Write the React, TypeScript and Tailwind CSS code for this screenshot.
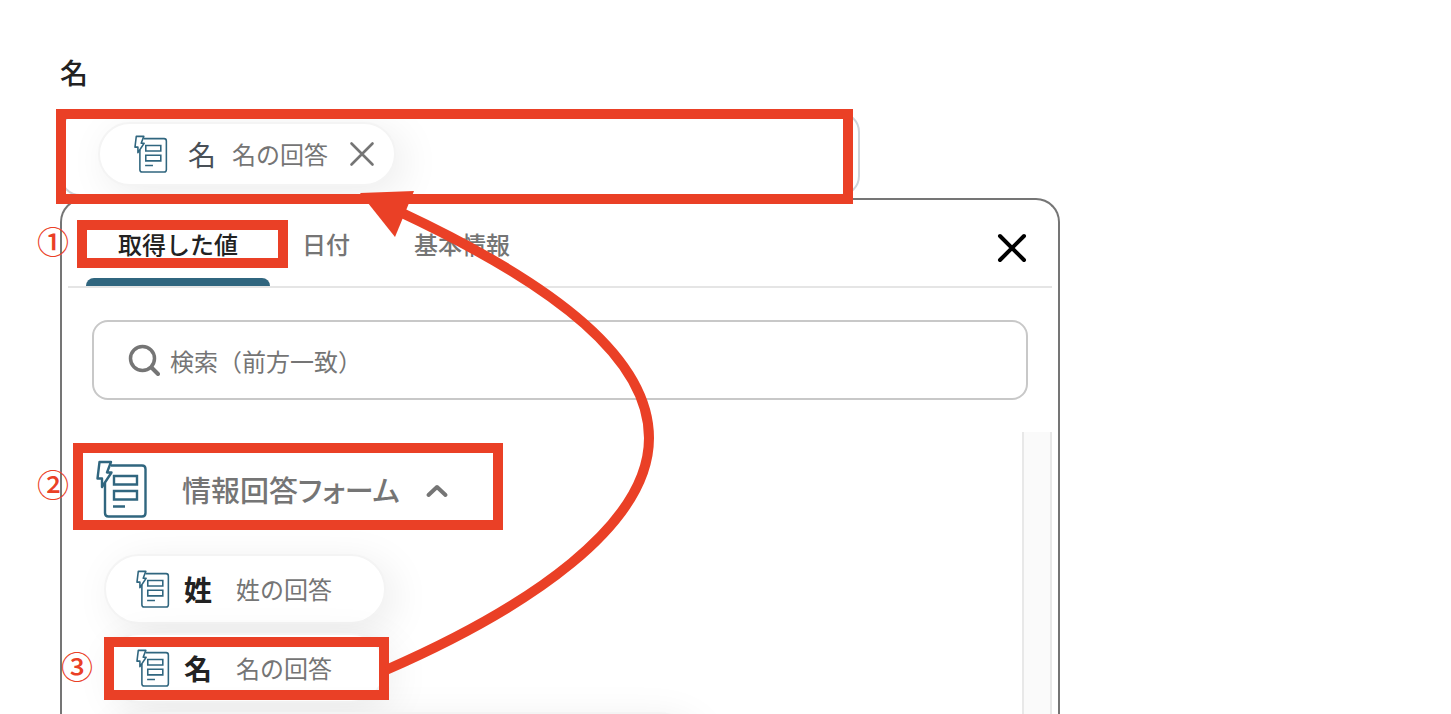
import { useState } from 'react';
import type { ReactNode } from 'react';

const TABS = ['取得した値', '日付', '基本情報'];

const ANSWERS = [
  { name: '姓', description: '姓の回答' },
  { name: '名', description: '名の回答' },
];

export default function App() {
  const [activeTab, setActiveTab] = useState(TABS[0]);
  const [query, setQuery] = useState('');
  const [isOpen, setIsOpen] = useState(true);

  return (
    <main className="relative flex h-screen flex-col overflow-hidden bg-white pt-[52px] pr-6 pl-[60px] font-['Noto_Sans_CJK_JP',sans-serif] text-[#222]">
      <h1 className="text-[28px] leading-10 font-medium">名</h1>

      {/* Selected value */}
      <div className="mt-5 flex h-[84px] w-full max-w-[800px] shrink-0 items-center overflow-hidden rounded-[20px] border-2 border-[#ced4da] pl-9">
        <div className="flex h-16 items-center rounded-full border-2 border-[#f4f4f4] bg-white pr-[18px] pl-[34px] shadow-[8px_8px_40px_rgba(0,0,0,0.08)]">
          <FormIcon className="h-[38px] w-[34px]" />
          <span className="ml-5 text-[28px] leading-10 text-[#495057]">名</span>
          <span className="ml-4 text-2xl text-[#757575]">名の回答</span>
          <button type="button" aria-label="削除" className="ml-5 text-[#757575]">
            <CloseIcon className="size-7" strokeWidth={3} />
          </button>
        </div>
      </div>

      {/* Value picker */}
      <section className="mt-0.5 flex min-h-0 w-full max-w-[1000px] flex-1 flex-col rounded-t-3xl border-2 border-b-0 border-[#757575] bg-white px-1.5">
        <div className="flex h-[88px] shrink-0 items-stretch border-b-2 border-[#e5e5e5] pr-6 pl-[18px]">
          <div role="tablist" className="flex">
            {TABS.map((tab) => (
              <Tab key={tab} selected={tab === activeTab} onSelect={() => setActiveTab(tab)}>
                {tab}
              </Tab>
            ))}
          </div>
          <button type="button" aria-label="閉じる" className="mt-2.5 ml-auto self-center text-black">
            <CloseIcon className="size-8" strokeWidth={4} />
          </button>
        </div>

        <div className="mx-6 mt-8 flex h-20 shrink-0 items-center gap-2.5 rounded-2xl border-2 border-[#c8c8c8] pl-[34px]">
          <SearchIcon />
          <input
            type="text"
            aria-label="検索"
            value={query}
            onChange={(event) => setQuery(event.target.value)}
            placeholder="検索（前方一致）"
            className="h-full min-w-0 flex-1 rounded-2xl bg-transparent text-2xl outline-none placeholder:text-[#757575]"
          />
        </div>

        <div className="mt-8 flex min-h-0 flex-1">
          <div className="min-w-0 flex-1 overflow-hidden pt-7 pl-7">
            <button
              type="button"
              aria-expanded={isOpen}
              onClick={() => setIsOpen(!isOpen)}
              className="flex h-[58px] items-center text-[#757575]"
            >
              <FormIcon className="h-[58px] w-[52px]" />
              <span className="ml-[34px] text-[29px] leading-10 font-medium [font-feature-settings:'palt']">
                情報回答フォーム
              </span>
              <ChevronIcon />
            </button>

            {isOpen && (
              <ul className="mt-9 flex flex-col items-start gap-[9px] pl-2">
                {ANSWERS.map((answer) => (
                  <li key={answer.name}>
                    <button
                      type="button"
                      className="flex h-[70px] items-center rounded-full border-2 border-[#f4f4f4] bg-white pr-[52px] pl-[30px] shadow-[8px_8px_40px_rgba(0,0,0,0.08)]"
                    >
                      <FormIcon className="h-[38px] w-[34px]" />
                      <span className="ml-3.5 text-[28px] leading-10 font-bold">{answer.name}</span>
                      <span className="ml-6 text-2xl text-[#757575]">{answer.description}</span>
                    </button>
                  </li>
                ))}
                <li className="h-[70px] w-[590px] rounded-full border-2 border-[#f4f4f4] bg-white shadow-[8px_8px_40px_rgba(0,0,0,0.08)]" />
              </ul>
            )}
          </div>
          <div className="w-[30px] border-x-2 border-[#e8e8e8] bg-[#fafafa]" />
        </div>
      </section>

      <Annotations />
    </main>
  );
}

function Tab({
  selected,
  onSelect,
  children,
}: {
  selected: boolean;
  onSelect: () => void;
  children: ReactNode;
}) {
  return (
    <button
      type="button"
      role="tab"
      aria-selected={selected}
      onClick={onSelect}
      className={`flex flex-col justify-between pt-7 text-2xl font-medium ${
        selected ? 'text-[#222]' : 'text-[#757575]'
      }`}
    >
      <span className="px-8">{children}</span>
      {selected && <span className="h-2 w-full rounded-t-lg bg-[#30667f]" />}
    </button>
  );
}

// Steps and frames drawn over the screen
function Annotations() {
  return (
    <div className="pointer-events-none absolute inset-0 text-[32px] leading-10 font-medium text-[#ea4026]">
      <div className="absolute top-[109px] left-14 h-[95px] w-[797px] border-10 border-[#ea4026]" />
      <div className="absolute top-[220px] left-[77px] h-12 w-[211px] border-10 border-[#ea4026]" />
      <div className="absolute top-[443px] left-[73px] h-[87px] w-[430px] border-10 border-[#ea4026]" />
      <div className="absolute top-[637px] left-[104px] h-[63px] w-[285px] border-10 border-[#ea4026]" />
      <span className="absolute top-[220px] left-[37px]">①</span>
      <span className="absolute top-[463px] left-[37px]">②</span>
      <span className="absolute top-[645px] left-[61px]">③</span>
      <svg className="absolute top-0 left-0" width="700" height="714" viewBox="0 0 700 714" fill="none">
        <path
          d="M386 670C530 607 649 525 649 438C649 360 560 287 400 212"
          stroke="currentColor"
          strokeWidth="10"
        />
        <path d="M360 193L414 191L395 237Z" fill="currentColor" />
      </svg>
    </div>
  );
}

function FormIcon({ className }: { className: string }) {
  return (
    <svg className={className} viewBox="0 0 52 58" fill="none" stroke="#30667f" strokeWidth="2.400">
      <path d="M15 5.500H46Q49.500 5.500 49.500 9V53Q49.500 56.500 46 56.500H12.500Q9 56.500 9 53V23" />
      <path d="M3.500 2H15L11 12.500H15.500L6 27V18.500H1.500Z" strokeLinejoin="round" />
      <path d="M18 16H41V24.500H18ZM18 31H41V39.500H18ZM17 46.500H29" />
    </svg>
  );
}

function CloseIcon({ className, strokeWidth }: { className: string; strokeWidth: number }) {
  return (
    <svg
      className={className}
      viewBox="0 0 32 32"
      fill="none"
      stroke="currentColor"
      strokeWidth={strokeWidth}
      strokeLinecap="round"
    >
      <path d="M4 4L28 28M28 4L4 28" />
    </svg>
  );
}

function SearchIcon() {
  return (
    <svg className="size-8" viewBox="0 0 32 32" fill="none" stroke="#757575" strokeLinecap="round">
      <circle cx="14.500" cy="14.500" r="12" strokeWidth="3.500" />
      <path d="M23.500 23.500L30 30" strokeWidth="4" />
    </svg>
  );
}

function ChevronIcon() {
  return (
    <svg
      className="ml-[25px] size-6"
      viewBox="0 0 24 24"
      fill="none"
      stroke="currentColor"
      strokeWidth="4"
      strokeLinecap="round"
      strokeLinejoin="round"
    >
      <path d="M3.500 18L12 10L20.500 18" />
    </svg>
  );
}
